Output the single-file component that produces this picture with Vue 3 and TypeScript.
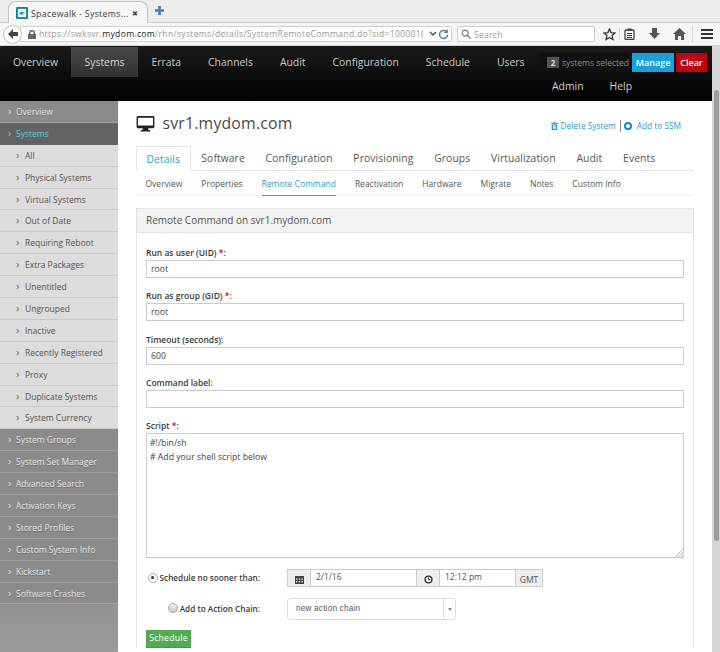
<script setup lang="ts">
const topNav = ['Overview', 'Systems', 'Errata', 'Channels', 'Audit', 'Configuration', 'Schedule', 'Users']
const sideTop = ['System Groups', 'System Set Manager', 'Advanced Search', 'Activation Keys', 'Stored Profiles', 'Custom System Info', 'Kickstart', 'Software Crashes']
const sideSub = ['All', 'Physical Systems', 'Virtual Systems', 'Out of Date', 'Requiring Reboot', 'Extra Packages', 'Unentitled', 'Ungrouped', 'Inactive', 'Recently Registered', 'Proxy', 'Duplicate Systems', 'System Currency']
const tabs = ['Details', 'Software', 'Configuration', 'Provisioning', 'Groups', 'Virtualization', 'Audit', 'Events']
const subTabs = ['Overview', 'Properties', 'Remote Command', 'Reactivation', 'Hardware', 'Migrate', 'Notes', 'Custom Info']
const fields = [
  { label: 'Run as user (UID)', req: true, value: 'root' },
  { label: 'Run as group (GID)', req: true, value: 'root' },
  { label: 'Timeout (seconds):', req: false, value: '600' },
  { label: 'Command label:', req: false, value: '' },
]
</script>

<template>
  <div class="window">
    <div class="tabstrip">
      <div class="tab">
        <svg class="favicon" width="12" height="12" viewBox="0 0 16 16">
          <rect x="0" y="0" width="16" height="16" rx="1.5" fill="#1a7f97" />
          <rect x="2.500" y="2.500" width="11" height="11" fill="#e8f4f7" />
          <path d="M4 9c2-3 6-3 8-1-2 0-3 1-4 3-1-1-2-2-4-2z" fill="#1a9cc4" />
        </svg>
        <span class="tab-title">Spacewalk - Systems...</span>
        <span class="tab-close">✖</span>
      </div>
      <svg class="newtab" width="9" height="9" viewBox="0 0 10 10"><path d="M3.500 0h3v3.500H10v3H6.500V10h-3V6.500H0v-3h3.500z" fill="#4a7fb8" /></svg>
    </div>
    <div class="toolbar">
      <div class="back">
        <svg width="12" height="12" viewBox="0 0 12 12"><path d="M6 1 1 6l5 5V8h5V4H6z" fill="#444" /></svg>
      </div>
      <div class="urlbar">
        <svg class="lock" width="8" height="9" viewBox="0 0 8 9"><path d="M1 4V3a3 3 0 0 1 6 0v1h1v5H0V4zm1.500 0h3V3a1.500 1.500 0 0 0-3 0z" fill="#666" /></svg>
        <span class="url"><i>https://swksvr.</i><b>mydom.com</b><i>/rhn/systems/details/SystemRemoteCommand.do?sid=100001(</i></span>
        <svg class="url-chevron" width="8" height="6" viewBox="0 0 8 6"><path d="M1 1l3 3 3-3" fill="none" stroke="#555" stroke-width="1.500" /></svg>
        <svg width="11" height="11" viewBox="0 0 11 11"><path d="M9.500 5.500a4 4 0 1 1-1.200-2.900" fill="none" stroke="#5a7ea6" stroke-width="1.500" /><path d="M9.800 0v4h-4z" fill="#5a7ea6" /></svg>
      </div>
      <div class="searchbar">
        <svg width="10" height="10" viewBox="0 0 11 11"><circle cx="4.500" cy="4.500" r="3.300" fill="none" stroke="#777" stroke-width="1.200" /><path d="M7 7l3.500 3.500" stroke="#777" stroke-width="1.500" /></svg>
        <span>Search</span>
      </div>
      <div class="tools">
        <svg width="13" height="13" viewBox="0 0 13 13"><path d="M6.500 1l1.600 3.600 3.900.4-2.900 2.600.8 3.900-3.400-2-3.400 2 .8-3.900L1 5l3.900-.4z" fill="none" stroke="#333" stroke-width="1.300" /></svg>
        <span class="tool-div"></span>
        <svg width="11" height="12" viewBox="0 0 11 12"><rect x="1" y="2" width="9" height="9.500" rx="1" fill="none" stroke="#444" stroke-width="1.300" /><rect x="3.500" y="0.500" width="4" height="2.500" fill="#444" /><path d="M3 5.500h5M3 7.500h5M3 9.500h5" stroke="#444" /></svg>
        <svg class="t-down" width="11" height="12" viewBox="0 0 11 12"><path d="M3 0h5v5h3l-5.500 6L0 5h3z" fill="#555" /></svg>
        <svg class="t-home" width="13" height="12" viewBox="0 0 13 12"><path d="M6.500 0 13 6h-2v6H8V8H5v4H2V6H0z" fill="#555" /></svg>
        <span class="tool-div d2"></span>
        <svg class="t-menu" width="12" height="10" viewBox="0 0 12 10"><path d="M0 1h12M0 5h12M0 9h12" stroke="#333" stroke-width="2" /></svg>
      </div>
    </div>

    <div class="viewport">
      <div class="page">
        <header class="nav">
          <ul class="nav-list">
            <li v-for="n in topNav" :key="n" :class="{ active: n === 'Systems' }">{{ n }}</li>
          </ul>
          <div class="ssm">
            <span class="ssm-box"><span class="ssm-count">2</span>systems selected</span>
            <span class="btn-manage">Manage</span>
            <span class="btn-clear">Clear</span>
          </div>
          <div class="nav-second"><span>Admin</span><span>Help</span></div>
        </header>

        <div class="body">
          <aside class="side">
            <div class="s-top">Overview</div>
            <div class="s-top s-current">Systems</div>
            <div v-for="s in sideSub" :key="s" class="s-sub">{{ s }}</div>
            <div v-for="s in sideTop" :key="s" class="s-top">{{ s }}</div>
          </aside>

          <main class="main">
            <div class="title-row">
              <svg class="monitor" width="19" height="16" viewBox="0 0 20 17">
                <path d="M2 0h16a1.500 1.500 0 0 1 1.500 1.500v10A1.500 1.500 0 0 1 18 13h-5v2h2v1.500H5V15h2v-2H2A1.500 1.500 0 0 1 .5 11.500v-10A1.500 1.500 0 0 1 2 0zm0 1.800V10h16V1.800z" fill="#222" fill-rule="evenodd" />
              </svg>
              <h1>svr1.mydom.com</h1>
              <div class="actions">
                <a>
                  <svg width="7" height="8" viewBox="0 0 7 8"><path d="M2.500 0h2v1H7v1H0V1h2.500zM.7 2.500h5.600V8H.7zm1.300 1v3.500h.7V3.500zm1.200 0v3.500h.7V3.500zm1.200 0v3.500h.6V3.500z" fill="#2aa1d8" fill-rule="evenodd" /></svg>
                  Delete System
                </a>
                <span class="a-div"></span>
                <a>
                  <svg class="ssm-ic" width="8" height="8" viewBox="0 0 8 8"><circle cx="4" cy="4" r="3" fill="none" stroke="#0d8ac7" stroke-width="2" /></svg>
                  Add to SSM
                </a>
              </div>
            </div>

            <ul class="tabs">
              <li v-for="t in tabs" :key="t" :class="{ active: t === 'Details' }">{{ t }}</li>
            </ul>
            <ul class="subtabs">
              <li v-for="t in subTabs" :key="t" :class="{ active: t === 'Remote Command' }">{{ t }}</li>
            </ul>

            <section class="panel">
              <div class="panel-head">Remote Command on svr1.mydom.com</div>
              <div class="panel-body">
                <div v-for="f in fields" :key="f.label" class="field">
                  <label>{{ f.label }}<template v-if="f.req">{{ ' ' }}<em>*</em>:</template></label>
                  <div class="input">{{ f.value }}</div>
                </div>
                <div class="field script">
                  <label>Script <em>*</em>:</label>
                  <div class="textarea">
                    <div>#!/bin/sh</div>
                    <div># Add your shell script below</div>
                    <svg class="grip" width="9" height="9" viewBox="0 0 9 9"><path d="M9 1 1 9M9 4 4 9M9 7 7 9" stroke="#bbb" /></svg>
                  </div>
                </div>

                <div class="sched-row">
                  <div class="radio-label"><span class="radio checked"></span>Schedule no sooner than:</div>
                  <div class="dt">
                    <span class="addon ic">
                      <svg width="9" height="9" viewBox="0 0 9 9"><path d="M0 1h9v8H0z" fill="#444" /><path d="M1 3.500h1.500v1.200H1zM3.700 3.500h1.500v1.200H3.700zM6.400 3.500h1.500v1.200H6.400zM1 6h1.500v1.200H1zM3.700 6h1.500v1.200H3.700zM6.400 6h1.500v1.200H6.400z" fill="#eee" /></svg>
                    </span>
                    <span class="dt-val date">2/1/16</span>
                    <span class="addon ic">
                      <svg width="9" height="9" viewBox="0 0 9 9"><circle cx="4.500" cy="4.500" r="3.400" fill="none" stroke="#333" stroke-width="1.400" /><path d="M4.500 2.500v2h1.500" fill="none" stroke="#333" /></svg>
                    </span>
                    <span class="dt-val time">12:12 pm</span>
                    <span class="addon gmt">GMT</span>
                  </div>
                </div>
                <div class="chain-row">
                  <div class="radio-label"><span class="radio"></span>Add to Action Chain:</div>
                  <div class="select">
                    <span class="sel-text">new action chain</span>
                    <span class="sel-arrow"></span>
                  </div>
                </div>
                <button class="btn-schedule" type="button">Schedule</button>
              </div>
            </section>
          </main>
        </div>
      </div>
      <div class="scrollbar"><div class="thumb"></div></div>
    </div>
  </div>
</template>

<style>
html, body { margin: 0; overflow: hidden; }
</style>

<style scoped>
.window { width: 720px; height: 652px; overflow: hidden; font-family: "Open Sans", sans-serif; display: flex; flex-direction: column; background: #fff; }

.tabstrip { height: 23px; background: #ececec; border-bottom: 1px solid #cfcfcf; box-sizing: border-box; display: flex; align-items: flex-start; position: relative; }
.tab { width: 140px; height: 23px; margin-left: 8px; box-sizing: border-box; background: #f5f5f5; border: 1px solid #c4c4c4; border-bottom: none; border-radius: 8px 8px 0 0; display: flex; align-items: center; padding: 0 8px 0 7px; gap: 3px; color: #444; white-space: nowrap; transform: translateY(1px); }
.favicon { flex: none; }
.tab-title { font-size: 8.800px; letter-spacing: .3px; flex: 1; white-space: nowrap; padding-top: 1px; min-width: 0; }
.tab-close { font-size: 7px; color: #444; margin-right: 1px; flex: none; }
.newtab { margin: 6px 0 0 7px; }

.toolbar { height: 23px; background: #f5f5f5; border-bottom: 1px solid #d4d4d4; box-sizing: border-box; display: flex; align-items: center; position: relative; padding-left: 3px; }
.back { width: 19px; height: 19px; box-sizing: border-box; border: 1px solid #c4c4c4; border-radius: 50%; background: #fafafa; display: flex; align-items: center; justify-content: center; z-index: 1; }
.urlbar { width: 432px; height: 16px; margin-left: -2px; box-sizing: border-box; background: #fff; border: 1px solid #cfcfcf; border-radius: 0 2px 2px 0; display: flex; align-items: center; padding: 0 2px 0 7px; }
.lock { flex: none; }
.url { flex: 1; margin-left: 3px; min-width: 0; white-space: nowrap; font-size: 8.600px; letter-spacing: .3px; color: #222; }
.url i { font-style: normal; color: #999; }
.url b { font-weight: 400; color: #222; }
.url-chevron { margin: 0 1px 0 0; flex: none; }
.searchbar { width: 138px; height: 16px; margin-left: 5px; box-sizing: border-box; background: #fff; border: 1px solid #cfcfcf; border-radius: 2px; display: flex; align-items: center; padding-left: 3px; gap: 3px; font-size: 8.500px; letter-spacing: .3px; color: #999; }
.tools { margin-left: 8px; display: flex; align-items: center; height: 100%; }
.tool-div { width: 1px; height: 12px; background: #d8d8d8; margin: 0 4px 0 3px; }
.t-down { margin-left: 13.500px; }
.t-home { margin-left: 13px; }
.tool-div.d2 { margin: 0 8px 0 6px; height: 18px; }

.viewport { flex: 1; min-height: 0; display: flex; overflow: hidden; }
.page { width: 712px; flex: none; display: flex; flex-direction: column; }
.scrollbar { width: 8px; background: #d6d6d6; position: relative; flex: none; }
.thumb { position: absolute; top: 44px; left: 2px; width: 5px; height: 451px; background: #9c9c9c; border-radius: 3px; }

.nav { height: 55px; flex: none; background: linear-gradient(#1a1a1a, #000); position: relative; color: #c8c8c8; font-size: 10.400px; padding-top: 1px; box-sizing: border-box; }
.nav-list { list-style: none; margin: 0; padding: 0; display: flex; height: 30px; }
.nav-list li { padding: 0 13.500px; line-height: 30px; white-space: nowrap; }
.nav-list li.active { background: linear-gradient(#4a4a4a, #303030); color: #d4d4d4; }
.nav-list li:first-child { padding-left: 13px; padding-right: 13px; }
.ssm { position: absolute; left: 539px; top: 7px; display: flex; align-items: center; height: 19px; }
.ssm-box { background: #111; height: 19px; width: 90px; display: flex; align-items: center; font-size: 8.500px; color: #8a8a8a; padding-left: 8px; box-sizing: border-box; white-space: nowrap; }
.ssm-count { background: #4d5258; color: #ddd; width: 12px; height: 11px; line-height: 11px; text-align: center; font-weight: 700; font-size: 8px; margin-right: 3px; }
.btn-manage { width: 42px; height: 19px; margin-left: 3px; background: #1a9fdc; color: #fff; font-size: 9px; font-weight: 600; line-height: 19px; text-align: center; }
.btn-clear { width: 31px; height: 19px; margin-left: 2px; background: #c00010; color: #fff; font-size: 9px; font-weight: 600; line-height: 19px; text-align: center; }
.nav-second { position: absolute; left: 552px; top: 30px; display: flex; gap: 26px; line-height: 20px; color: #d0d0d0; font-size: 10.400px; }

.body { flex: 1; display: flex; min-height: 0; }
.side { width: 118px; flex: none; background: linear-gradient(#8b8b8b, #8b8b8b 80%, #9a9a9a); display: flex; flex-direction: column; font-size: 8.500px; }
.s-top, .s-sub { height: 21.900px; line-height: 21px; box-sizing: border-box; white-space: nowrap; position: relative; flex: none; }
.s-top { padding-left: 16px; color: #e6e6e6; border-bottom: 1px solid #a2a2a2; text-shadow: 0 1px 0 #6f6f6f; background: #8b8b8b; }
.s-top::before, .s-sub::before { content: "›"; position: absolute; top: -1px; font-size: 11px; }
.s-top::before { left: 8px; }
.s-sub::before { left: 16px; color: #666; }
.s-sub { padding-left: 25px; color: #555; background: #dcdcdc; border-bottom: 1px solid #c8c8c8; }
.s-current { background: #636363; color: #56d0dc; border-bottom: none; text-shadow: none; }

.main { flex: 1; min-width: 0; padding: 0 18px 0 17.500px; box-sizing: border-box; color: #4a4a4a; }
.title-row { height: 45px; display: flex; align-items: center; }
.monitor { margin-right: 8px; flex: none; }
h1 { margin: 0 0 2px; font-size: 15.800px; font-weight: 400; color: #4a4a4a; letter-spacing: .2px; }
.actions { margin-left: auto; margin-right: 13px; display: flex; align-items: center; font-size: 8.300px; color: #2aa1d8; margin-top: 4px; }
.actions a { display: flex; align-items: center; gap: 3px; }
.ssm-ic { margin-right: 2px; }
.a-div { width: 1px; height: 12px; background: #888; margin: 0 3px 0 4px; }

.tabs { list-style: none; margin: 0; padding: 0; display: flex; height: 25px; border-bottom: 1px solid #e4e4e4; box-sizing: border-box; font-size: 10.300px; color: #555; letter-spacing: .1px; }
.tabs li { padding: 0 10.400px; line-height: 24px; white-space: nowrap; }
.tabs li.active { color: #2aa1d8; background: #fff; border: 1px solid #e4e4e4; border-bottom: 1px solid #fff; height: 25px; box-sizing: border-box; padding: 0 10px; }
.subtabs { list-style: none; margin: 0; padding: 0 0 0 10px; display: flex; gap: 19px; height: 25px; border-bottom: 1px solid #eee; box-sizing: border-box; font-size: 8.500px; color: #555; }
.subtabs li { line-height: 25px; height: 25px; box-sizing: border-box; white-space: nowrap; }
.subtabs li.active { color: #2aa1d8; border-bottom: 1px solid #1ba3e0; }

.panel { margin: 12px 0 0 .5px; border: 1px solid #e4e4e4; border-bottom: none; }
.panel-head { height: 24px; line-height: 23px; background: #f3f3f3; border-bottom: 1px solid #e4e4e4; box-sizing: border-box; padding-left: 9px; font-size: 10px; color: #555; }
.panel-body { padding: 13px 9px 0; }
.field { margin-bottom: 11.250px; height: 32px; }
.field.script { height: auto; margin-bottom: 11px; }
label { display: block; font-size: 8.500px; font-weight: 600; color: #3a3a3a; line-height: 14px; height: 14px; }
label em { color: #d00; font-style: normal; }
.input { height: 18px; box-sizing: border-box; border: 1px solid #ccc; font-size: 8.700px; line-height: 16px; padding-left: 4px; color: #444; }
.textarea { height: 125px; box-sizing: border-box; border: 1px solid #ccc; font-size: 8.700px; line-height: 14px; padding: 1.500px 3px 0; color: #444; position: relative; }
.grip { position: absolute; right: 0; bottom: 0; }

.sched-row { display: flex; align-items: center; height: 18px; }
.radio-label { width: 114px; flex: none; display: flex; justify-content: flex-end; align-items: center; font-size: 8.200px; font-weight: 600; color: #3a3a3a; white-space: nowrap; gap: 2px; margin-top: -1px; }
.radio { width: 8px; height: 8px; border-radius: 50%; border: 1px solid #aaa; background: linear-gradient(#eee, #ccc); box-sizing: content-box; position: relative; flex: none; }
.radio.checked { background: #fff; }
.radio.checked::after { content: ""; position: absolute; left: 2.500px; top: 2.500px; width: 3px; height: 3px; border-radius: 50%; background: #333; }
.dt { margin-left: 27px; width: 256px; height: 18px; display: flex; box-sizing: border-box; border: 1px solid #ccc; font-size: 8.500px; color: #555; }
.addon { background: #eee; display: flex; align-items: center; justify-content: center; flex: none; box-sizing: border-box; }
.addon.ic { width: 23px; padding-top: 3px; border-right: 1px solid #ccc; }
.addon.gmt { width: 27px; border-left: 1px solid #ccc; padding-top: 2px; }
.dt-val { line-height: 14px; padding-left: 5px; box-sizing: border-box; flex: none; }
.dt-val.date { width: 106px; border-right: 1px solid #ccc; }
.dt-val.time { flex: 1; }
.chain-row { display: flex; align-items: center; height: 23px; margin-top: 10px; }
.select { margin-left: 27px; width: 169px; height: 22px; box-sizing: border-box; border: 1px solid #ddd; border-radius: 3px; display: flex; align-items: center; font-family: "Liberation Sans", sans-serif; font-size: 8.200px; color: #555; letter-spacing: .2px; }
.sel-text { flex: 1; padding-left: 8px; }
.sel-arrow { width: 11px; height: 100%; border-left: 1px solid #ddd; position: relative; }
.sel-arrow::after { content: ""; position: absolute; left: 4px; top: 9px; border: 2px solid transparent; border-top: 3px solid #888; border-bottom: none; }
.btn-schedule { display: block; margin-top: 10px; width: 45px; height: 18px; padding: 0; border: none; background: #4cae50; border-bottom: 1px solid #3f9d43; color: #fff; font-family: "Open Sans", sans-serif; font-size: 8.700px; font-weight: 400; letter-spacing: .2px; text-align: center; line-height: 17px; }
</style>
